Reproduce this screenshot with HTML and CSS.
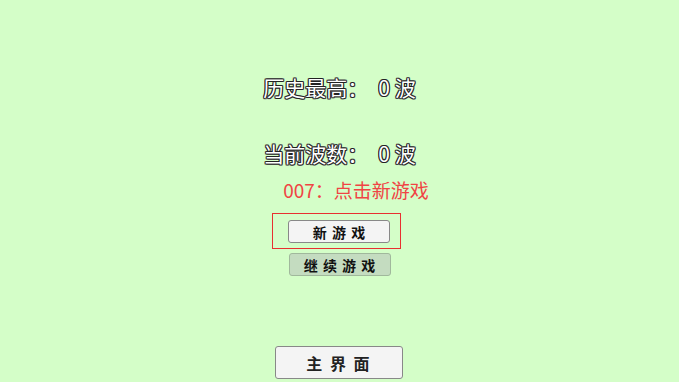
FILE: index.html
```html
<!DOCTYPE html>
<html lang="zh">
<head>
    <meta charset="UTF-8">
    <title>游戏</title>
    <link rel="stylesheet" href="styles.css">
</head>
<body>
    <div class="screen">
        <div class="score best">历史最高：<span class="num">0 波</span></div>
        <div class="score current">当前波数：<span class="num">0 波</span></div>
        <div class="tip">007：点击新游戏</div>
        <div class="focus-box">
            <button class="btn btn-new">新 游 戏</button>
        </div>
        <button class="btn btn-continue" disabled>继 续 游 戏</button>
        <div class="spacer"></div>
        <button class="btn btn-main">主 界 面</button>
    </div>
</body>
</html>
```

FILE: styles.css
```css
body {
    margin: 0;
    padding: 0;
    background-color: #d4fec8;
    font-family: "Noto Sans CJK SC", "Liberation Sans", sans-serif;
}
.screen {
    width: 679px;
    height: 382px;
    display: flex;
    flex-direction: column;
    align-items: center;
}
.score {
    font-size: 21px;
    line-height: 24px;
    color: #fff;
    text-shadow: 1px 0 0 #222, -1px 0 0 #222, 0 1px 0 #222, 0 -1px 0 #222,
        1px 1px 0 #555, -1px -1px 0 #555, 1px -1px 0 #555, -1px 1px 0 #555;
}
.score .num {
    margin-left: 10px;
}
.best {
    margin-top: 75px;
}
.current {
    margin-top: 42px;
}
.tip {
    margin-top: 14px;
    margin-left: 33px;
    font-size: 19px;
    line-height: 22px;
    color: #f04444;
}
.focus-box {
    margin-top: 12px;
    margin-left: -6px;
    width: 127px;
    height: 34px;
    border: 1px solid #e83030;
    display: flex;
    align-items: flex-start;
}
.btn {
    font-family: "Noto Sans CJK SC", sans-serif;
    font-size: 14px;
    font-weight: bold;
    letter-spacing: 1px;
    color: #111;
    border: 1px solid #888;
    border-radius: 3px;
    background-color: #f4f4f4;
    padding: 0 0 0 1px;
    margin: 0;
}
.btn-new {
    width: 102px;
    height: 23px;
    margin-left: 15px;
    margin-top: 6px;
}
.btn-continue {
    margin-top: 4px;
    width: 102px;
    height: 23px;
    background-color: #c4dcc0;
    border-color: #a0b89c;
    color: #111;
}
.spacer {
    flex: 1;
}
.btn-main {
    width: 128px;
    height: 33px;
    margin-bottom: 3px;
    margin-left: -2px;
    font-size: 16px;
    letter-spacing: 2px;
    color: #222;
}
```
